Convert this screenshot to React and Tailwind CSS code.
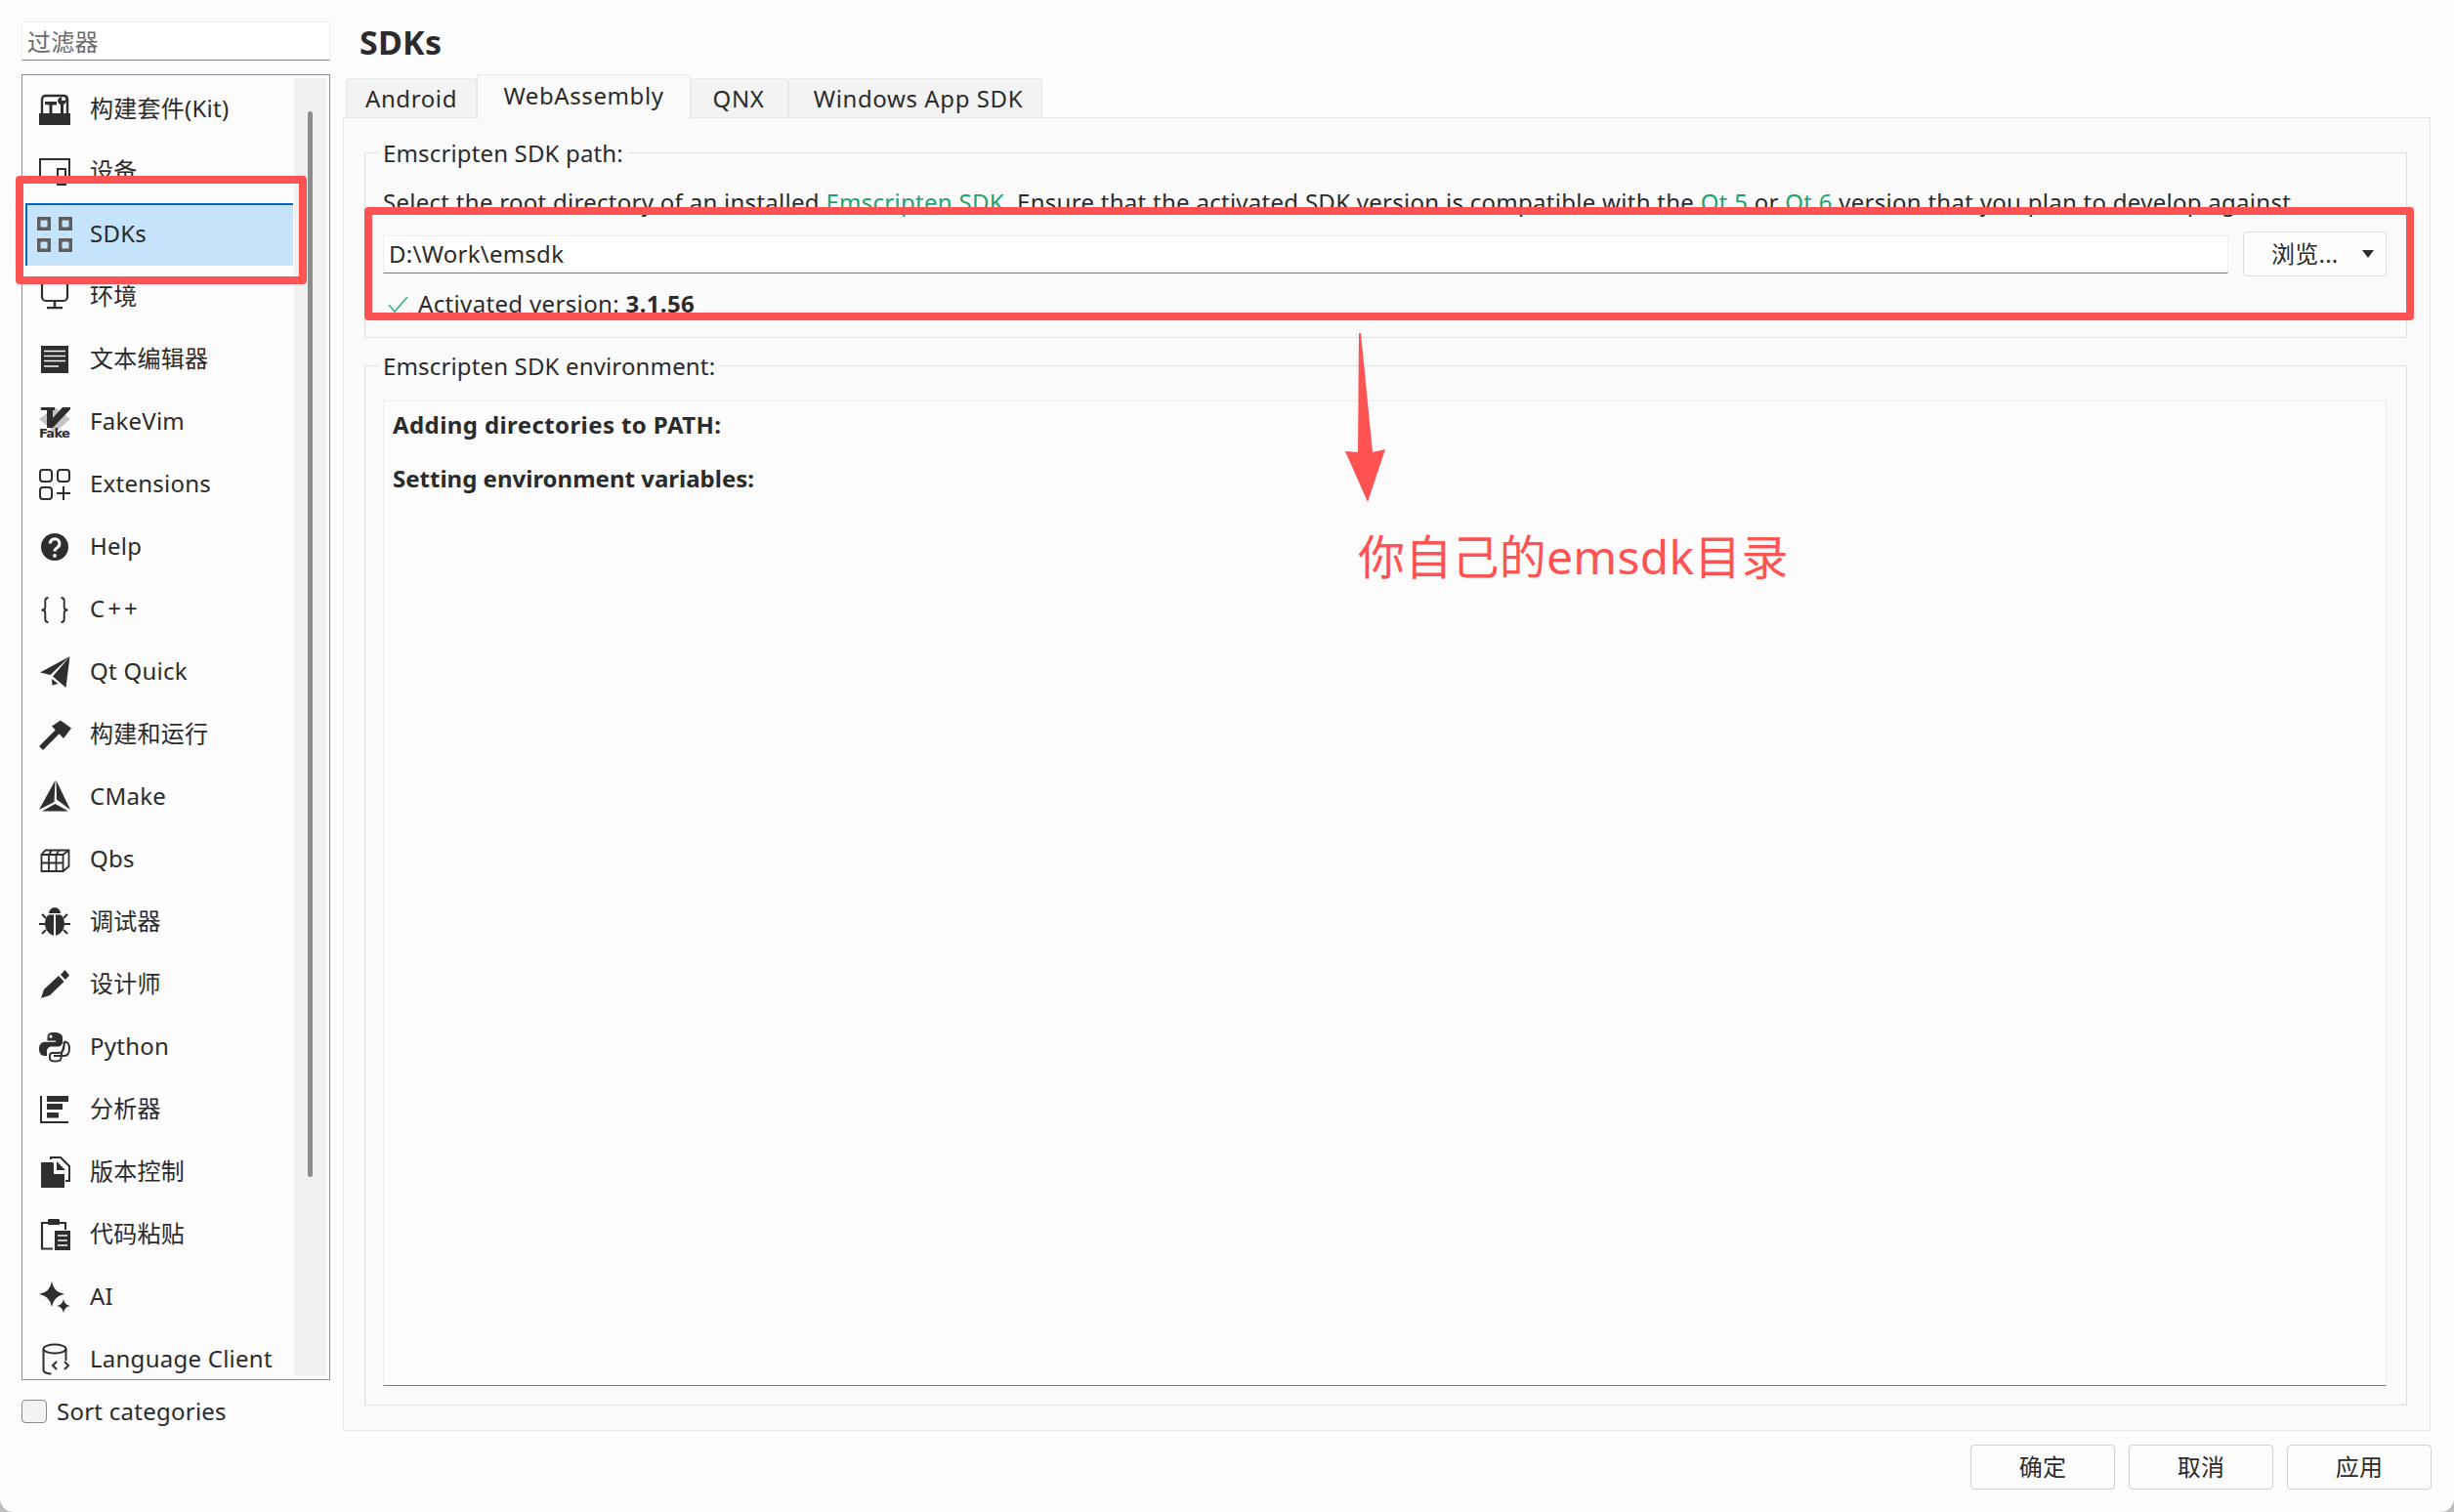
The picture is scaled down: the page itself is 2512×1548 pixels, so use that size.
import React from 'react'

const Svg = ({ children, box = '0 2 32 32' }) => (
  <svg viewBox={box} className="w-8 h-8 shrink-0 overflow-visible" fill="#2e2e2e">
    {children}
  </svg>
)

const icons = {
  kit: (
    <Svg box="0 0 32 32">
      <rect x="0" y="20" width="32" height="12" />
      <path d="M3 21V6q0-4 4-4h18q4 0 4 4v15" fill="none" stroke="#2e2e2e" strokeWidth="2.4" />
      <path d="M6 8h12v3.500h-4.500V21h-3v-9.500L6 11z" />
      <path d="M19 6.500a5 5 0 0 0 3 4.600V21h3V11.100a5 5 0 0 0 3-4.600 5 5 0 0 0-1.200-3.300v3.800h-3.600V3.200A5 5 0 0 0 19 6.500z" />
    </Svg>
  ),
  device: (
    <Svg>
      <path d="M1 24V5h30v19" fill="none" stroke="#2e2e2e" strokeWidth="2" />
      <rect x="19" y="15" width="8" height="16" fill="#fcfcfc" stroke="#2e2e2e" strokeWidth="2" />
    </Svg>
  ),
  sdk: (
    <Svg box="0 0 32 32">
      <g fill="none" stroke="#5f5f5f" strokeWidth="3.500">
        <rect x="-0.25" y="-0.25" width="10.5" height="10.5" />
        <rect x="21.75" y="-0.25" width="10.5" height="10.5" />
        <rect x="-0.25" y="21.75" width="10.5" height="10.5" />
        <rect x="21.75" y="21.750" width="10.5" height="10.5" />
      </g>
    </Svg>
  ),
  env: (
    <Svg>
      <rect x="3" y="1" width="26" height="21" rx="4" fill="none" stroke="#2e2e2e" strokeWidth="2.200" />
      <path d="M14.800 22h2.400v6h-2.400zM8 28h16v2.200H8z" />
    </Svg>
  ),
  editor: (
    <Svg>
      <rect x="2" y="4" width="28" height="28" />
      <path d="M5 9.500h22M5 14.500h22M5 19.500h22M5 25h15" stroke="#fcfcfc" strokeWidth="1.500" />
    </Svg>
  ),
  fake: (
    <Svg>
      <polygon points="16,3 32,15 16,29 0,15" fill="#c4c4c4" />
      <polygon points="2,3 16,3 16,6 14,6 14,14 24,3 32,3 32,5 14,24 8,24 8,6 2,6" />
      <text x="0" y="33.500" fontSize="13" fontWeight="700" textLength="32" fontFamily="'DejaVu Sans', sans-serif">Fake</text>
    </Svg>
  ),
  ext: (
    <Svg>
      <g fill="none" stroke="#2e2e2e" strokeWidth="2">
        <rect x="1" y="3" width="12" height="12" rx="3" />
        <rect x="19" y="3" width="12" height="12" rx="3" />
        <rect x="1" y="21" width="12" height="12" rx="3" />
        <path d="M25 20v14M18 27h14" />
      </g>
    </Svg>
  ),
  help: (
    <Svg>
      <circle cx="16" cy="18" r="14" />
      <path d="M11.300 14.500a4.800 4.800 0 1 1 7.500 4c-1.800 1.100-2.800 1.800-2.800 4" fill="none" stroke="#fcfcfc" strokeWidth="3" />
      <circle cx="16" cy="27" r="1.900" fill="#fcfcfc" />
    </Svg>
  ),
  cpp: (
    <Svg>
      <g fill="none" stroke="#2e2e2e" strokeWidth="1.900">
        <path d="M9.500 6C7 6 6.300 7 6.300 9v6.500c0 2-1 3-3.800 3 2.800 0 3.800 1 3.800 3V28c0 2 .7 3 3.200 3" />
        <path d="M22.500 6C25 6 25.700 7 25.700 9v6.500c0 2 1 3 3.800 3-2.800 0-3.800 1-3.800 3V28c0 2-.7 3-3.200 3" />
      </g>
    </Svg>
  ),
  quick: (
    <Svg>
      <polygon points="31.500,2 1,18.500 11.500,21" />
      <polygon points="31.500,2 14,22.500 27.500,34" />
      <polygon points="13,25 19.500,30 13.500,31.500" />
    </Svg>
  ),
  hammer: (
    <Svg>
      <path d="M2 32 19 15" stroke="#2e2e2e" strokeWidth="5.500" />
      <polygon points="13,9.500 22,3.500 33,11.500 25,22" />
    </Svg>
  ),
  cmake: (
    <Svg>
      <polygon points="16.500,1 15.500,23 0,31" />
      <polygon points="17.500,1 32,31 18,20.500" />
      <polygon points="3,32.500 16.500,25 30,32.500" />
    </Svg>
  ),
  qbs: (
    <Svg>
      <g fill="none" stroke="#2e2e2e" strokeWidth="1.800">
        <path d="M2.500 13h22v17h-22zM2.500 21.500h22M10 13v17M17.500 13v17" />
        <path d="M2.500 13l4-4.500h24V25l-6 5M24.500 13l6-4.500M10 13l3-4.500M17.500 13l3-4.500" />
      </g>
    </Svg>
  ),
  bug: (
    <Svg>
      <path d="M10 9c0-3 3-6 6-6s6 3 6 6z" />
      <path d="M15 10.500H10c-2.500 1.500-4 5-4 9.500s3 10 9 12zM17 10.500h5c2.500 1.500 4 5 4 9.500s-3 10-9 12z" />
      <path d="M0 20h6M26 20h6M3 10l4 4M29 10l-4 4M3 30l4-4M29 30l-4-4" stroke="#2e2e2e" strokeWidth="2" fill="none" />
    </Svg>
  ),
  pen: (
    <Svg>
      <polygon points="2,32 5,23 20,9 25.500,15 11,29" />
      <polygon points="26.500,3 31,8.500 27,13 22,8" />
    </Svg>
  ),
  python: (
    <Svg>
      <path d="M15 3c-5 0-6.500 2-6.500 5v3.500H17v1.300H6c-4 0-6 3-6 7.200s2.200 7 5.500 7H8v-4.500c0-3 2-5 5-5h6.500c2.500 0 4.500-2 4.500-4.500V8c0-3-3.500-5-9-5z" />
      <circle cx="12" cy="7.200" r="1.600" fill="#fcfcfc" />
      <path d="M25.500 12.500V18c0 4-3 6-6 6h-6c-1.600 0-2.500 1.300-2.500 3v2.500c0 2 2.500 3 5.500 3s6-.6 6-3V27H15m7.500 0h3c4 0 5.500-3 5.500-7.200s-1.500-7.300-4.500-7.300z" fill="none" stroke="#2e2e2e" strokeWidth="1.900" />
    </Svg>
  ),
  analyzer: (
    <Svg>
      <path d="M2 4v27h28" fill="none" stroke="#2e2e2e" strokeWidth="2" />
      <rect x="8" y="4" width="22" height="6" />
      <rect x="8" y="12" width="16" height="6" />
      <rect x="8" y="21" width="12" height="5.500" />
    </Svg>
  ),
  vcs: (
    <Svg>
      <path d="M2 8h12l1 1v11h11v14H2z" />
      <path d="M12 5V3h10l9 9v15h-4" fill="none" stroke="#2e2e2e" strokeWidth="2" />
      <path d="M18 7v9h9z" />
    </Svg>
  ),
  paste: (
    <Svg>
      <path d="M14 32.500H3V6h24v7" fill="none" stroke="#2e2e2e" strokeWidth="2.200" />
      <rect x="9" y="2" width="12" height="6" rx="1" />
      <rect x="16" y="14" width="16" height="20" />
      <path d="M19 19h10M19 24h10M19 29h10" stroke="#fcfcfc" strokeWidth="1.700" />
    </Svg>
  ),
  ai: (
    <Svg>
      <path d="M13 2q1.800 11 13 13-11.200 2-13 13-1.800-11-13-13Q11.200 13 13 2z" />
      <path d="M25 20q1 6 7 7-6 1-7 7-1-6-7-7 6-1 7-7z" />
    </Svg>
  ),
  lang: (
    <Svg>
      <g fill="none" stroke="#2e2e2e" strokeWidth="2">
        <ellipse cx="16" cy="7" rx="11.500" ry="4.500" />
        <path d="M4.500 7v22c0 2 4 3.500 8 3.500M27.500 7v12" />
        <path d="M18 20l-4 4 4 4M26 20l4 4-4 4" />
      </g>
    </Svg>
  ),
}

const categories = [
  ['kit', '构建套件(Kit)'],
  ['device', '设备'],
  ['sdk', 'SDKs'],
  ['env', '环境'],
  ['editor', '文本编辑器'],
  ['fake', 'FakeVim'],
  ['ext', 'Extensions'],
  ['help', 'Help'],
  ['cpp', 'C++', 'tracking-[3px]'],
  ['quick', 'Qt Quick'],
  ['hammer', '构建和运行'],
  ['cmake', 'CMake'],
  ['qbs', 'Qbs'],
  ['bug', '调试器'],
  ['pen', '设计师'],
  ['python', 'Python'],
  ['analyzer', '分析器'],
  ['vcs', '版本控制'],
  ['paste', '代码粘贴'],
  ['ai', 'AI'],
  ['lang', 'Language Client'],
]

const CategoryRow = ({ id, label, labelClass = '' }) => {
  const selected = id === 'sdk'
  return (
    <div
      className={
        selected
          ? 'h-16 shrink-0 flex items-center gap-5 pl-[12px] pb-0.5 bg-[#c5e3fb] border-t-2 border-l-2 border-[#0067c0]'
          : 'h-16 shrink-0 flex items-center gap-5 pl-[14px]'
      }
    >
      {icons[id]}
      <span className={`${labelClass} pb-0.5 whitespace-nowrap`}>{label}</span>
    </div>
  )
}

const Sidebar = () => (
  <aside className="w-[316px] ml-[22px] mr-[13px] shrink-0 flex flex-col">
    <div className="mt-[22px] h-10 bg-white border border-[#ececec] border-b-[#8a8a8a] rounded-t-[3px] flex items-center pl-[5px] pt-0.5 text-[#6b6b6b]">
      过滤器
    </div>
    <div className="mt-[14px] h-[1337px] border border-[#8c8c96] flex overflow-hidden">
      <div className="w-[274px] ml-[3px] pt-[3px] flex flex-col">
        {categories.map(([id, label, labelClass]) => (
          <CategoryRow key={id} id={id} label={label} labelClass={labelClass} />
        ))}
      </div>
      <div className="w-[33px] ml-px my-[3px] bg-[#f0f0f0] pt-[34px] pl-[14px]">
        <div className="w-[5px] h-[1091px] bg-[#8c8c8c] rounded-full" />
      </div>
    </div>
    <div className="mt-[14px] flex items-center gap-[10px]">
      <div className="w-[26px] h-6 bg-[#f3f3f3] border border-[#8a8a8a] rounded-[4px]" />
      <span>Sort categories</span>
    </div>
  </aside>
)

const tabs = [
  ['Android', 'w-[134px] h-10 bg-[#f3f3f3]'],
  ['WebAssembly', 'w-[219px] h-[46px] -mb-0.5 bg-[#fafafa] relative pb-1'],
  ['QNX', 'w-[100px] h-10 bg-[#f3f3f3] pr-0.5'],
  ['Windows App SDK', 'w-[260px] h-10 bg-[#f3f3f3] pl-1.5'],
]

const Tab = ({ label, className }) => (
  <div className={`${className} border border-b-0 border-[#e8e8e8] rounded-t-[3px] flex items-center justify-center tracking-[0.6px]`}>
    {label}
  </div>
)

const GroupTitle = ({ children }) => (
  <div className="-mt-4 ml-[13px] px-[5px] w-fit h-8 leading-8 bg-[#fafafa] tracking-[0.15px]">{children}</div>
)

const Link = ({ children }) => <span className="text-[#1fa36d]">{children}</span>

const BrowseButton = () => (
  <div className="w-[147px] h-[46px] shrink-0 bg-[#fdfdfd] border border-[#dcdcdc] rounded-[4px] flex items-center pl-7 pr-3 justify-between">
    <span>浏览...</span>
    <svg viewBox="0 0 12 8" className="w-3 h-2" fill="#2e2e2e">
      <polygon points="0,0 12,0 6,8" />
    </svg>
  </div>
)

const FooterButton = ({ children }) => (
  <div className="w-[148px] h-[46px] bg-[#fdfdfd] border border-[#d0d0d0] rounded-[4px] flex items-center justify-center">
    {children}
  </div>
)

const Content = () => (
  <main className="w-[2138px] shrink-0 flex flex-col">
    <div className="h-[76px] pt-[10px] pl-[17px] flex items-center text-[34px] font-bold">SDKs</div>
    <div className="h-[44px] pl-[3px] flex items-end">
      {tabs.map(([label, className]) => (
        <Tab key={label} label={label} className={className} />
      ))}
    </div>
    <div className="w-[2137px] h-[1345px] border border-[#e8e8e8] bg-[#fafafa] pl-[21px] pr-[23px] pt-[35px] flex flex-col">
      <section className="h-[190px] border border-[#dedede]">
        <GroupTitle>Emscripten SDK path:</GroupTitle>
        <div className="mt-[18px] ml-[18px] h-8 leading-8 whitespace-nowrap tracking-[0.28px]">
          Select the root directory of an installed <Link>Emscripten SDK</Link>. Ensure that the activated SDK version is compatible with the <Link>Qt 5</Link> or <Link>Qt 6</Link> version that you plan to develop against.
        </div>
        <div className="mt-[14px] pl-[18px] pr-5 flex items-center gap-[15px]">
          <div className="flex-1 h-[39px] bg-white border border-[#efefef] border-b-[#777777] pl-[5px] flex items-center">
            D:\Work\emsdk
          </div>
          <BrowseButton />
        </div>
        <div className="mt-3 ml-[23px] h-8 flex items-center gap-[10px] tracking-[0.35px]">
          <svg viewBox="0 0 21 17" className="w-[21px] h-[17px]" fill="none" stroke="#2fb77f" strokeWidth="1.600">
            <path d="M1 9l6 7L20 1" />
          </svg>
          <span>
            Activated version: <b>3.1.56</b>
          </span>
        </div>
      </section>
      <section className="mt-7 h-[1065px] border border-[#dedede] flex flex-col">
        <GroupTitle>Emscripten SDK environment:</GroupTitle>
        <div className="mt-[19px] mb-[19px] ml-[18px] mr-5 flex-1 bg-[#fcfcfc] border border-[#eeeeee] border-b-[#777777] pl-[9px] pt-2 font-bold flex flex-col gap-[23px]">
          <div className="h-8 leading-8 tracking-[0.4px]">Adding directories to PATH:</div>
          <div className="h-8 leading-8 tracking-normal">Setting environment variables:</div>
        </div>
      </section>
    </div>
    <div className="mt-[14px] flex justify-end gap-[14px]">
      <FooterButton>确定</FooterButton>
      <FooterButton>取消</FooterButton>
      <FooterButton>应用</FooterButton>
    </div>
  </main>
)

// red marks drawn on top of the screenshot
const Annotations = () => (
  <>
    <div className="absolute left-4 top-[180px] w-[298px] h-[111px] border-8 border-[#ff5252] rounded-[4px]" />
    <div className="absolute left-[373px] top-[212px] w-[2098px] h-[116px] border-8 border-[#ff5252] rounded-[4px]" />
    <svg className="absolute left-0 top-0 w-[2512px] h-[1548px] pointer-events-none" viewBox="0 0 2512 1548" fill="#ff5252">
      <polygon points="1391,341 1393,341 1405,463 1418,460 1400,514 1377,462 1390,463" />
    </svg>
    <div className="absolute left-[1390px] top-[535px] h-[70px] leading-[70px] text-[48px] text-[#ff5252] whitespace-nowrap">
      你自己的emsdk目录
    </div>
  </>
)

export default function App() {
  return (
    <div className="w-[2512px] h-[1548px] bg-[#bdbdbd] overflow-hidden">
      <div className="relative w-full h-full bg-[#fcfcfc] rounded-b-[14px] flex text-[24px] tracking-[0.25px] text-[#2b2b2b] font-['Noto_Sans','Noto_Sans_CJK_SC',sans-serif]">
        <Sidebar />
        <Content />
        <Annotations />
      </div>
    </div>
  )
}
